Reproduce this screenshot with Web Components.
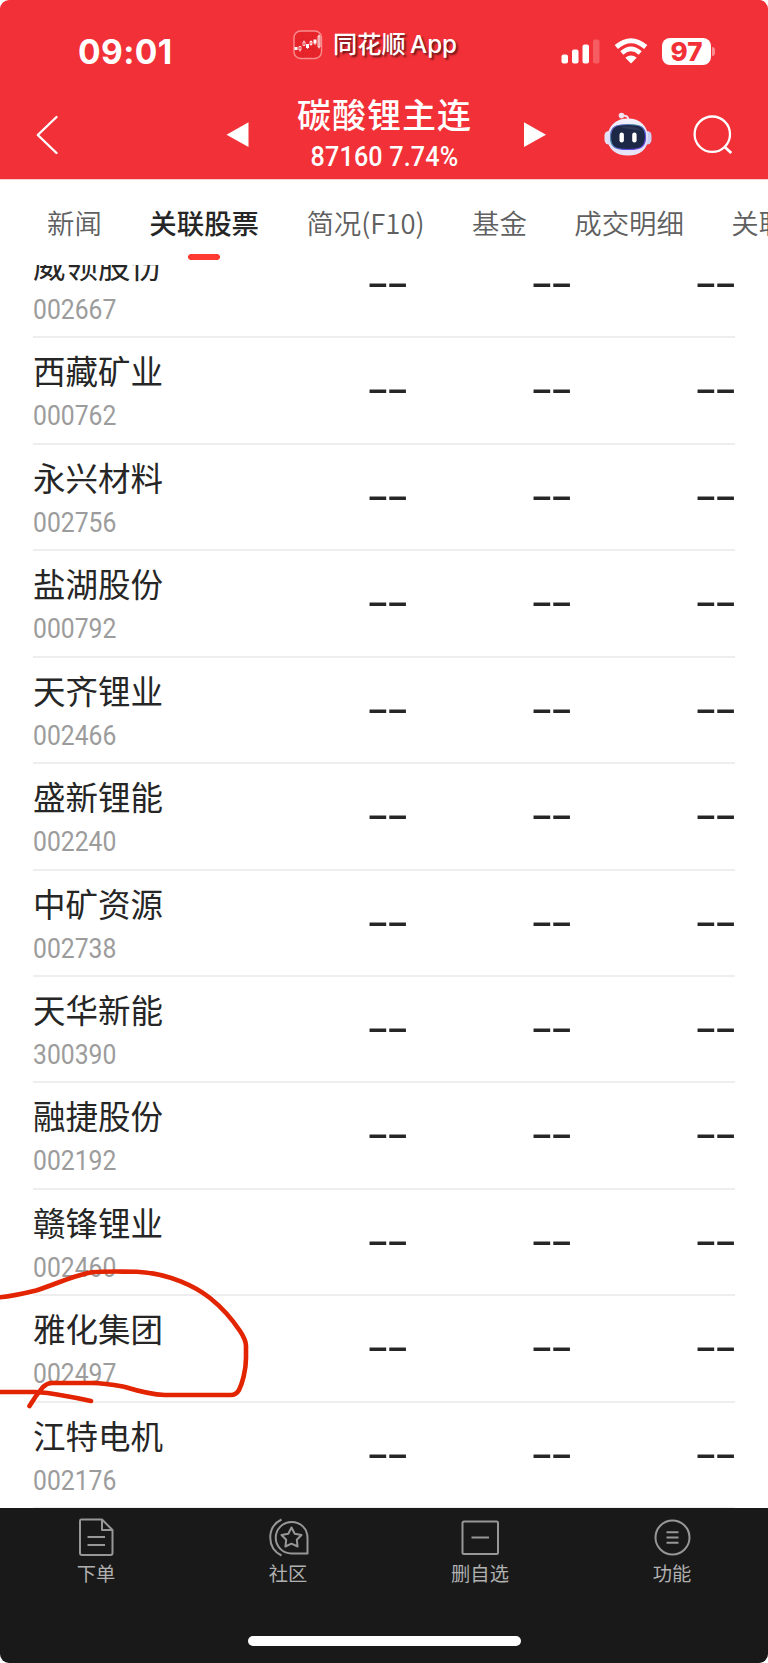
<!DOCTYPE html>
<html lang="zh-CN">
<head>
<meta charset="utf-8">
<title>碳酸锂主连</title>
<style>
  html { background: #fff; }
  body {
    margin: 0;
    width: 768px;
    height: 1663px;
    overflow: hidden;
    font-family: "Noto Sans CJK SC", sans-serif;
  }
</style>
</head>
<body>
<stock-app></stock-app>

<script>
class StatusBar extends HTMLElement {
  constructor() {
    super();
    this.attachShadow({ mode: 'open' });
  }

  connectedCallback() {
    this.shadowRoot.innerHTML = `
      <style>
        :host {
          display: grid;
          grid-template-columns: 250px 1fr 250px;
          height: 90px;
          color: #fff;
        }
        .time {
          font: 700 33.500px/36px Inter, sans-serif;
          letter-spacing: .4px;
          padding: 34px 0 0 78px;
        }
        .app {
          display: flex;
          align-items: center;
          gap: 10px;
          height: 30px;
          padding: 30px 0 0 43px;
          font: 500 24.200px/30px Inter, "Noto Sans CJK SC", sans-serif;
          word-spacing: -2px;
          text-shadow: 2px 2px 2px rgba(0, 0, 0, .55);
          white-space: nowrap;
        }
        .right {
          display: flex;
          align-items: flex-start;
          padding: 38px 0 0 43px;
        }
        .wifi { margin-left: 14px; }
        .battery {
          width: 49px;
          height: 27px;
          margin-left: 14px;
          border-radius: 8px;
          background: #fff;
          color: #f23037;
          font: 800 26px/27px Inter, sans-serif;
          text-align: center;
        }
        .cap {
          width: 3px;
          height: 9px;
          margin: 9px 0 0 1px;
          border-radius: 0 4px 4px 0;
          background: rgba(255, 255, 255, .45);
        }
      </style>
      <div class="time">${this.getAttribute('time')}</div>
      <div class="app">
        <svg width="30" height="30" viewBox="0 0 30 30">
          <rect x="1" y="1" width="27.5" height="27.5" rx="6.5" fill="#e8242b" stroke="#f98d8f" stroke-width="1.4"/>
          <path d="M2 10H28M2 19H28M10 2V28M20 2V28" stroke="#d91d24" stroke-width=".5"/>
          <path d="M1.500 17H4.500V20H1.500ZM13 14H16V18H13ZM20.500 9.500H23.500V13.500H20.500Z" fill="#fff"/>
          <path d="M6 16.500H8V20H6ZM10 12H12V15.500H10ZM17 11.500H19V14.500H17ZM25 6H27V17H25ZM11 10.500V12M7 20V21.500M14.500 18V19M22 13V15M18 10.500V15.500M26 4.500V18.500" fill="none" stroke="#fff" stroke-width=".8"/>
        </svg>
        <span>${this.getAttribute('app')}</span>
      </div>
      <div class="right">
        <svg width="39" height="27" viewBox="0 0 39 27" fill="#fff">
          <rect x="0.500" y="16.500" width="6.500" height="9" rx="2"/>
          <rect x="11" y="11.500" width="6.500" height="14" rx="2"/>
          <rect x="21.500" y="6.500" width="6.500" height="19" rx="2"/>
          <rect x="32" y="1.500" width="6.500" height="24" rx="2" opacity=".22"/>
        </svg>
        <svg class="wifi" width="34" height="27" viewBox="0 0 34 27" fill="none" stroke="#fff">
          <path d="M2.300 9Q17-3.500 31.700 9" stroke-width="5"/>
          <path d="M7.800 15Q17 6.800 26.200 15" stroke-width="4.600"/>
          <path d="M11.300 19.700Q17 15.100 22.700 19.700L17 25.500Z" fill="#fff" stroke="none"/>
        </svg>
        <div class="battery">${this.getAttribute('battery')}</div>
        <div class="cap"></div>
      </div>
    `;
  }
}

class QuoteHeader extends HTMLElement {
  constructor() {
    super();
    this.attachShadow({ mode: 'open' });
  }

  connectedCallback() {
    this.shadowRoot.innerHTML = `
      <style>
        :host {
          display: grid;
          grid-template-columns: 226px 23px 1fr 22px 58px 48px 41px 40px 35px;
          height: 89px;
          color: #fff;
        }
        svg { display: block; overflow: visible; }
        .back { margin: 25px 0 0 36px; }
        .arrow { margin-top: 32px; }
        .title { text-align: center; }
        .name {
          font-size: 34px;
          font-weight: 500;
          line-height: 40px;
          letter-spacing: 1px;
          margin: 4px 4px 0 0;
        }
        .price {
          font: 500 27px/30px Roboto, sans-serif;
          letter-spacing: .2px;
          margin: 8px 4px 0 0;
          transform: scaleX(.93);
        }
        .bot { margin-top: 22px; }
        .search { margin-top: 25px; }
      </style>
      <svg class="back" width="22" height="40" viewBox="0 0 22 40" fill="none" stroke="#fff" stroke-width="2.400" stroke-linecap="round" stroke-linejoin="round">
        <path d="M20.500 2L1.800 20L20.500 38"/>
      </svg>
      <svg class="arrow" width="23" height="26"><path d="M.5 12.700L22.500 .3V25Z" fill="#fff"/></svg>
      <div class="title">
        <div class="name">${this.getAttribute('name')}</div>
        <div class="price">${this.getAttribute('price')} ${this.getAttribute('change')}</div>
      </div>
      <svg class="arrow" width="22" height="26"><path d="M22 12.700L0 .3V25Z" fill="#fff"/></svg>
      <span></span>
      <svg class="bot" width="48" height="46" viewBox="0 0 48 46">
        <defs>
          <linearGradient id="shell" x1="0" y1="0" x2="0" y2="1">
            <stop offset="0" stop-color="#f3f2fb"/>
            <stop offset=".6" stop-color="#dcdcf7"/>
            <stop offset="1" stop-color="#e9e6f8"/>
          </linearGradient>
          <linearGradient id="rim" x1="0" y1="0" x2="1" y2="1">
            <stop offset="0" stop-color="#7857df"/>
            <stop offset=".35" stop-color="#4b8ba8"/>
            <stop offset=".7" stop-color="#5750d8"/>
            <stop offset="1" stop-color="#7a3fdc"/>
          </linearGradient>
        </defs>
        <path d="M18 4Q24.500 2.500 24.500 8.500" fill="none" stroke="#f0dff0" stroke-width="1.900"/>
        <circle cx="17.500" cy="3.600" r="2.800" fill="#f3e2ef"/>
        <rect x="0.500" y="19" width="9" height="13.500" rx="4.500" fill="#e4e1f6"/>
        <rect x="38.500" y="19" width="9" height="13.500" rx="4.500" fill="#cdcef3"/>
        <path d="M24 6.500C36 6.500 44 14 44 25.500C44 37.500 36 43.500 24 43.500C12 43.500 3.500 37.500 3.500 25.500C3.500 14 12 6.500 24 6.500Z" fill="url(#shell)"/>
        <path d="M24 12.500C37 12.500 41.500 15 41.500 25C41.500 35.500 36 37.500 24 37.500C12 37.500 6.500 35.500 6.500 25C6.500 15 11 12.500 24 12.500Z" fill="#1d2847" stroke="url(#rim)" stroke-width="1.200"/>
        <path d="M16 15.500Q30 12.500 38 19Q28 17 16 15.500Z" fill="#3a4566" opacity=".6"/>
        <rect x="15.500" y="20.500" width="4.400" height="10" rx="2.200" fill="#fff"/>
        <rect x="28.200" y="20.500" width="4.400" height="10" rx="2.200" fill="#fff"/>
      </svg>
      <span></span>
      <svg class="search" width="40" height="40" viewBox="0 0 40 40" fill="none" stroke="#fff" stroke-width="2.300">
        <circle cx="19.300" cy="19.200" r="17.700"/>
        <path d="M31.200 31.500L38.300 38" stroke-width="2.800"/>
      </svg>
    `;
  }
}

class TabStrip extends HTMLElement {
  constructor() {
    super();
    this.attachShadow({ mode: 'open' });
    this.shadowRoot.innerHTML = `
      <style>
        :host {
          display: flex;
          gap: 47.400px;
          height: 86px;
          padding-left: 47px;
          box-sizing: border-box;
          overflow: hidden;
          border-top: 1px solid #f3d0d0;
        }
        ::slotted(span) {
          flex: none;
          height: 62px;
          margin-top: 21px;
          font-size: 27.450px;
          font-weight: 350;
          line-height: 42px;
          color: #606060;
          white-space: nowrap;
        }
        ::slotted(span[active]) {
          font-weight: 500;
          color: #262626;
          background: linear-gradient(#ff3a30, #ff3a30) no-repeat center 53px / 26px 6px,
            radial-gradient(circle at 3px 3px, #ff3a30 2.700px, transparent 3.200px) no-repeat calc(50% - 13px) 53px / 6px 6px,
            radial-gradient(circle at 3px 3px, #ff3a30 2.700px, transparent 3.200px) no-repeat calc(50% + 13px) 53px / 6px 6px;
        }
      </style>
      <slot></slot>
    `;
  }
}

class StockRow extends HTMLElement {
  constructor() {
    super();
    this.attachShadow({ mode: 'open' });
  }

  connectedCallback() {
    this.shadowRoot.innerHTML = `
      <style>
        :host {
          display: grid;
          grid-template-columns: 209px 164px 164px 164px;
          height: 106.430px;
          box-sizing: border-box;
          border-bottom: 2px solid #eee;
        }
        .name {
          font-size: 32.500px;
          line-height: 40px;
          margin-top: 12px;
          color: #262626;
          font-weight: 400;
          white-space: nowrap;
        }
        .code {
          font: 400 27px/30px Roboto, sans-serif;
          color: #9c9c9c;
          margin-top: 11px;
          transform: scaleX(.915);
          transform-origin: left;
        }
        .value {
          font: 400 44px/50px "Liberation Sans", sans-serif;
          letter-spacing: -1.950px;
          color: #262626;
          text-align: right;
          margin-top: 25px;
          transform: scaleX(1.550);
          transform-origin: right;
        }
      </style>
      <div>
        <div class="name">${this.getAttribute('name')}</div>
        <div class="code">${this.getAttribute('code')}</div>
      </div>
      <div class="value">--</div>
      <div class="value">--</div>
      <div class="value">--</div>
    `;
  }
}

class StockList extends HTMLElement {
  constructor() {
    super();
    this.attachShadow({ mode: 'open' });
    this.shadowRoot.innerHTML = `
      <style>
        :host {
          display: block;
          height: 1243px;
          overflow: hidden;
        }
        /* list is scrolled a little, the first row is cut */
        .rows { margin: -33px 33px 0; }
      </style>
      <div class="rows"><slot></slot></div>
    `;
  }
}

const ICONS = {
  order: '<path d="M4 2.500H25L35.500 13V36Q35.500 38 33.500 38H5Q3 38 3 36V4Q3 2.500 4 2.500ZM25 2.500V13H35.500M10.500 20H28M10.500 28H28"/>',
  community: '<path d="M12.500 2.500C-2.500 10-2.500 31 12.500 38.500M22.500 5C32 5 38.500 12 38.500 21V36.500H22.500A15.700 15.700 0 0 1 22.500 5Z"/><path d="M22.500 10.500L25.700 16.700L32.500 18L27.800 22.800L28.600 29.500L22.500 26.700L16.400 29.500L17.200 22.800L12.500 18L19.300 16.700Z"/>',
  remove: '<rect x="1.500" y="4.500" width="35.500" height="32.500" rx="1.500"/><path d="M10.500 20.500H28"/>',
  menu: '<circle cx="19.500" cy="20.500" r="17"/><path d="M13.500 15.300H25.500M13.500 20.500H25.500M13.500 25.700H25.500"/>'
};

class BarItem extends HTMLElement {
  constructor() {
    super();
    this.attachShadow({ mode: 'open' });
  }

  connectedCallback() {
    this.shadowRoot.innerHTML = `
      <style>
        :host {
          display: flex;
          flex-direction: column;
          align-items: center;
          flex: 1;
          padding-top: 9px;
          font-size: 19.300px;
          line-height: 28px;
          color: #b0b0b0;
        }
        svg { overflow: visible; margin-bottom: 1px; }
      </style>
      <svg width="39" height="41" viewBox="0 0 39 41" fill="none" stroke="#979797" stroke-width="2" stroke-linejoin="round">${ICONS[this.getAttribute('icon')]}</svg>
      <slot></slot>
    `;
  }
}

class BottomBar extends HTMLElement {
  constructor() {
    super();
    this.attachShadow({ mode: 'open' });
    this.shadowRoot.innerHTML = `
      <style>
        :host {
          display: flex;
          flex-direction: column;
          align-items: center;
          height: 155px;
          background: #191919;
        }
        .items { display: flex; width: 100%; height: 128px; }
        .home {
          width: 273px;
          height: 10px;
          border-radius: 5px;
          background: #fff;
        }
      </style>
      <div class="items"><slot></slot></div>
      <div class="home"></div>
    `;
  }
}

class PenMark extends HTMLElement {
  constructor() {
    super();
    this.attachShadow({ mode: 'open' });
    this.shadowRoot.innerHTML = `
      <style>
        :host {
          display: block;
          position: absolute;
          left: 0;
          top: 1260px;
          pointer-events: none;
        }
        svg { display: block; }
      </style>
      <svg width="260" height="155" viewBox="0 1260 260 155" fill="none" stroke="#e32400" stroke-width="4.600" stroke-linecap="round" stroke-linejoin="round">
        <path d="M-3 1297.500C12 1296.500 22 1294 36 1290.500C54 1285 68 1277.500 88 1273C97 1271 105 1271.500 137 1271.700C170 1273.500 196 1287 210 1298C225 1310 234 1322 240 1331Q246 1340 246 1346V1358C246 1371 242 1384 239 1390Q236 1395 231 1395H165C150 1394.500 138 1391 125 1387C112 1384.500 105 1383 92 1383H52Q47 1383 43 1387Q36 1395 29.500 1406"/>
        <path d="M-3 1392H35Q48 1392.500 60 1395C72 1397 82 1399 91 1401"/>
      </svg>
    `;
  }
}

class StockApp extends HTMLElement {
  constructor() {
    super();
    this.attachShadow({ mode: 'open' });
  }

  connectedCallback() {
    const stocks = [
      ['威领股份', '002667'],
      ['西藏矿业', '000762'],
      ['永兴材料', '002756'],
      ['盐湖股份', '000792'],
      ['天齐锂业', '002466'],
      ['盛新锂能', '002240'],
      ['中矿资源', '002738'],
      ['天华新能', '300390'],
      ['融捷股份', '002192'],
      ['赣锋锂业', '002460'],
      ['雅化集团', '002497'],
      ['江特电机', '002176']
    ];

    this.shadowRoot.innerHTML = `
      <style>
        :host {
          display: block;
          position: relative;
          width: 768px;
          height: 1663px;
          overflow: hidden;
          border-radius: 9px;
          background: #fff;
        }
        header { background: #f23037; }
      </style>
      <header>
        <status-bar time="09:01" app="同花顺 App" battery="97"></status-bar>
        <quote-header name="碳酸锂主连" price="87160" change="7.74%"></quote-header>
      </header>
      <tab-strip>
        <span>新闻</span>
        <span active>关联股票</span>
        <span>简况(F10)</span>
        <span>基金</span>
        <span>成交明细</span>
        <span>关联</span>
      </tab-strip>
      <stock-list>
        ${stocks.map(([name, code]) => `<stock-row name="${name}" code="${code}"></stock-row>`).join('')}
      </stock-list>
      <bottom-bar>
        <bar-item icon="order">下单</bar-item>
        <bar-item icon="community">社区</bar-item>
        <bar-item icon="remove">删自选</bar-item>
        <bar-item icon="menu">功能</bar-item>
      </bottom-bar>
      <pen-mark></pen-mark>
    `;
  }
}

customElements.define('status-bar', StatusBar);
customElements.define('quote-header', QuoteHeader);
customElements.define('tab-strip', TabStrip);
customElements.define('stock-row', StockRow);
customElements.define('stock-list', StockList);
customElements.define('bar-item', BarItem);
customElements.define('bottom-bar', BottomBar);
customElements.define('pen-mark', PenMark);
customElements.define('stock-app', StockApp);
</script>
</body>
</html>
